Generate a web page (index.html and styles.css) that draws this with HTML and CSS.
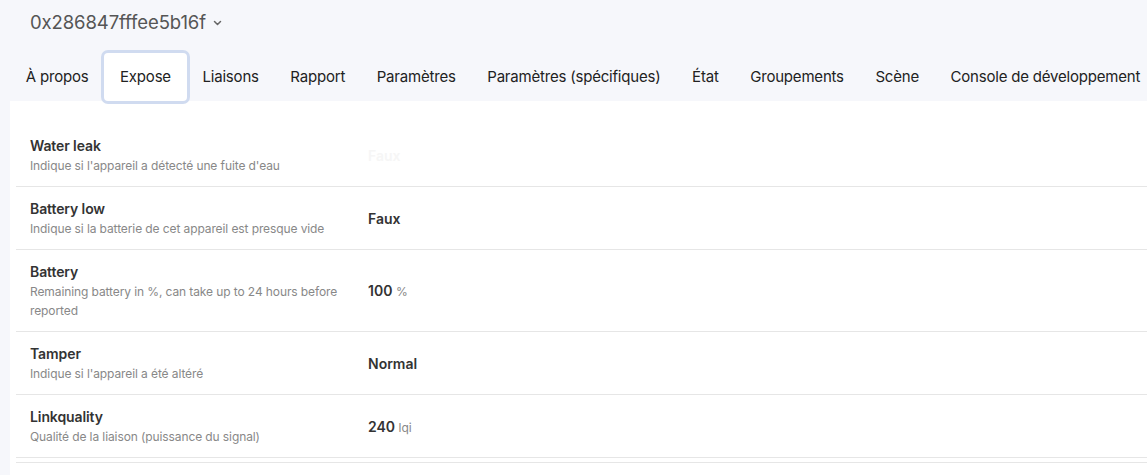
FILE: index.html
```html
<!DOCTYPE html>
<html lang="fr">

<head>
  <meta charset="UTF-8" />
  <meta name="viewport" content="width=device-width, initial-scale=1.0" />
  <title>0x286847fffee5b16f - Expose</title>
  <link rel="stylesheet" href="styles.css">
</head>

<body>
  <div class="device-header">
    <span class="device-name">0x286847fffee5b16f</span>
    <svg class="chevron" width="9" height="6" viewBox="0 0 9 6">
      <path d="M1.5 1.5 L4.5 4.5 L7.5 1.5" fill="none" stroke="#666" stroke-width="1.5" stroke-linecap="round" stroke-linejoin="round" />
    </svg>
  </div>

  <nav class="tabs">
    <a class="tab">À propos</a>
    <a class="tab active">Expose</a>
    <a class="tab">Liaisons</a>
    <a class="tab">Rapport</a>
    <a class="tab">Paramètres</a>
    <a class="tab">Paramètres (spécifiques)</a>
    <a class="tab">État</a>
    <a class="tab">Groupements</a>
    <a class="tab">Scène</a>
    <a class="tab">Console de développement</a>
  </nav>

  <div class="panel">
    <table class="exposes">
      <tbody>
        <tr>
          <td class="label">
            <div class="name">Water leak</div>
            <div class="desc">Indique si l'appareil a détecté une fuite d'eau</div>
          </td>
          <td class="value faded">Faux</td>
        </tr>
        <tr>
          <td class="label">
            <div class="name">Battery low</div>
            <div class="desc">Indique si la batterie de cet appareil est presque vide</div>
          </td>
          <td class="value">Faux</td>
        </tr>
        <tr>
          <td class="label">
            <div class="name">Battery</div>
            <div class="desc">Remaining battery in %, can take up to 24 hours before reported</div>
          </td>
          <td class="value">100 <span class="unit">%</span></td>
        </tr>
        <tr>
          <td class="label">
            <div class="name">Tamper</div>
            <div class="desc">Indique si l'appareil a été altéré</div>
          </td>
          <td class="value">Normal</td>
        </tr>
        <tr>
          <td class="label">
            <div class="name">Linkquality</div>
            <div class="desc">Qualité de la liaison (puissance du signal)</div>
          </td>
          <td class="value">240 <span class="unit">lqi</span></td>
        </tr>
      </tbody>
    </table>
    <div class="next-block"></div>
  </div>
</body>

</html>
```

FILE: styles.css
```css
body {
  font-family: Inter, 'Noto Sans', sans-serif;
  background-color: #f6f7fb;
  color: #333;
  margin: 0;
  padding: 0 0 0 10px;
  overflow: hidden;
}

.device-header {
  display: flex;
  align-items: center;
  gap: 7px;
  padding: 8px 20px 0;
  height: 28px;
}

.device-name {
  font-size: 18.5px;
  line-height: 28px;
  color: #555;
  letter-spacing: -0.1px;
}

.chevron {
  margin-top: 1px;
}

.tabs {
  display: flex;
  margin-top: 17px;
  white-space: nowrap;
}

.tab {
  font-size: 15px;
  line-height: 24px;
  padding: 12px 15.8px;
  color: #222;
  border-radius: 4px;
  letter-spacing: -0.2px;
}

.tab.active {
  background: #fff;
  box-shadow: 0 0 0 3px #d0dbf0;
  position: relative;
  z-index: 1;
}

.panel {
  background: #fff;
  padding: 23px 0 0 6px;
  height: 352px;
}

.exposes {
  width: 100%;
  border-collapse: collapse;
}

.exposes td {
  border-bottom: 1px solid #e6e6e6;
  vertical-align: middle;
}

.label {
  width: 322px;
  padding: 11px 15px 11px 14px;
}

.label-tall {
  padding-bottom: 12px;
}

.name {
  font-size: 14px;
  line-height: 21px;
  font-weight: 600;
  color: #333;
  letter-spacing: -0.1px;
}

.desc {
  font-size: 12px;
  line-height: 19px;
  color: #888;
  letter-spacing: -0.1px;
}

.value {
  font-size: 14px;
  font-weight: 600;
  color: #333;
  padding-left: 1px;
}

.value.faded {
  color: #f6f6f6;
}

.unit {
  font-size: 12px;
  font-weight: 400;
  color: #888;
}

.next-block {
  margin-top: 4px;
  border-top: 1px solid #e6e6e6;
}
```
